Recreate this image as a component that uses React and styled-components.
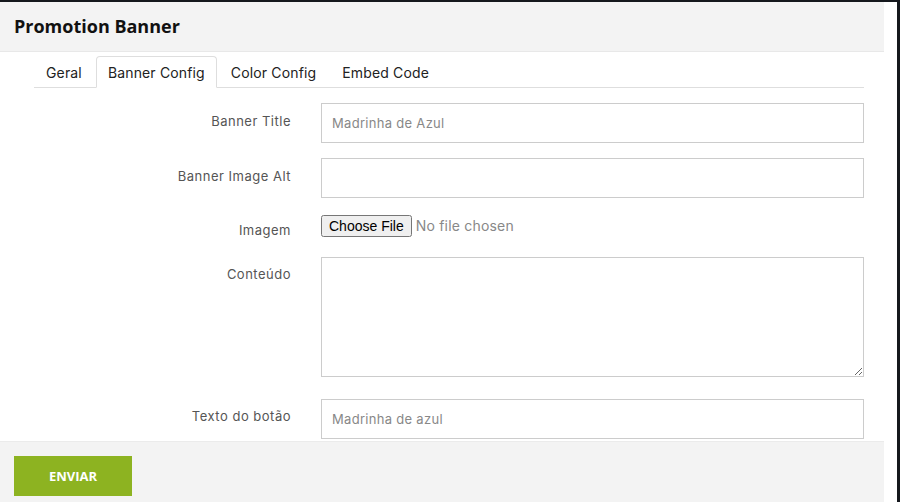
import styled, { createGlobalStyle } from 'styled-components';

const GlobalStyle = createGlobalStyle`
  html, body {
    margin: 0;
    padding: 0;
    background: #15181d;
  }
  * { box-sizing: border-box; }
`;

const Modal = styled.div`
  width: 897px;
  height: 500px;
  margin-top: 2px;
  background: #fff;
  display: flex;
  flex-direction: column;
  overflow: hidden;
  font-family: "Inter", "Noto Sans", sans-serif;
`;

const Header = styled.div`
  width: 884px;
  height: 50px;
  flex-shrink: 0;
  background: #f3f3f3;
  border-bottom: 1px solid #e8e8e8;
  display: flex;
  align-items: center;
  padding: 0 14px 2px;
`;

const Title = styled.h1`
  margin: 0;
  font-family: "Open Sans", sans-serif;
  font-size: 18px;
  font-weight: 700;
  color: #111;
`;

const Body = styled.div`
  flex: 1;
  overflow: hidden;
  padding: 4px 0 0 34px;
  width: 884px;
`;

const Tabs = styled.ul`
  list-style: none;
  margin: 0;
  padding: 0;
  width: 830px;
  display: flex;
  gap: 2px;
  border-bottom: 1px solid #dedede;
`;

const Tab = styled.li`
  padding: 0 11px;
  height: 32px;
  line-height: 32px;
  margin-bottom: -1px;
  font-size: 14px;
  letter-spacing: 0.15px;
  color: #222;
  border: 1px solid ${p => (p.$active ? '#dedede' : 'transparent')};
  border-bottom-color: ${p => (p.$active ? '#fff' : 'transparent')};
  border-radius: 4px 4px 0 0;
  background: ${p => (p.$active ? '#fff' : 'transparent')};
  cursor: pointer;
`;

const Form = styled.div`
  display: flex;
  flex-direction: column;
  gap: 15px;
  padding-top: 15px;
  width: 830px;
`;

const Row = styled.div`
  display: grid;
  grid-template-columns: 257px 543px;
  column-gap: 30px;
  align-items: start;
  margin-top: ${p => p.$gapAbove || 0}px;
`;

const Label = styled.label`
  text-align: right;
  font-size: 13px;
  letter-spacing: 0.5px;
  color: #555;
  padding-top: ${p => p.$top || 10}px;
`;

const Input = styled.input`
  width: 543px;
  height: 40px;
  border: 1px solid #ccc;
  padding: 0 10px;
  font-family: inherit;
  font-size: 13px;
  letter-spacing: 0.3px;
  color: #333;
  outline: none;
  &::placeholder { color: #888; }
`;

const TextArea = styled.textarea`
  width: 543px;
  height: 120px;
  border: 1px solid #ccc;
  padding: 10px;
  font-family: inherit;
  font-size: 13px;
  outline: none;
  display: block;
`;

const FileInput = styled.input`
  font-family: inherit;
  font-size: 14px;
  letter-spacing: 0.2px;
  color: #888;
  margin-top: 2px;
  height: 27px;
  &::file-selector-button {
    font-family: "Liberation Sans", Arial, sans-serif;
    font-size: 14px;
    letter-spacing: 0;
    color: #000;
    margin-right: 4px;
  }
`;

const Footer = styled.div`
  width: 884px;
  height: 61px;
  flex-shrink: 0;
  background: #f3f3f3;
  border-top: 1px solid #ebebeb;
  padding: 14px 14px 0;
`;

const SubmitButton = styled.button`
  width: 118px;
  height: 40px;
  border: none;
  background: #8db321;
  color: #fff;
  font-family: "Open Sans", sans-serif;
  font-weight: 700;
  font-size: 13px;
  cursor: pointer;
`;

const tabs = ['Geral', 'Banner Config', 'Color Config', 'Embed Code'];

export default function App() {
  return (
    <>
      <GlobalStyle />
      <Modal>
        <Header>
          <Title>Promotion Banner</Title>
        </Header>
        <Body>
          <Tabs>
            {tabs.map(t => (
              <Tab key={t} $active={t === 'Banner Config'}>{t}</Tab>
            ))}
          </Tabs>
          <Form>
            <Row>
              <Label>Banner Title</Label>
              <Input placeholder="Madrinha de Azul" />
            </Row>
            <Row>
              <Label>Banner Image Alt</Label>
              <Input />
            </Row>
            <Row>
              <Label $top={9}>Imagem</Label>
              <FileInput type="file" />
            </Row>
            <Row>
              <Label $top={9}>Conteúdo</Label>
              <TextArea />
            </Row>
            <Row $gapAbove={7}>
              <Label $top={9}>Texto do botão</Label>
              <Input placeholder="Madrinha de azul" />
            </Row>
          </Form>
        </Body>
        <Footer>
          <SubmitButton>ENVIAR</SubmitButton>
        </Footer>
      </Modal>
    </>
  );
}
